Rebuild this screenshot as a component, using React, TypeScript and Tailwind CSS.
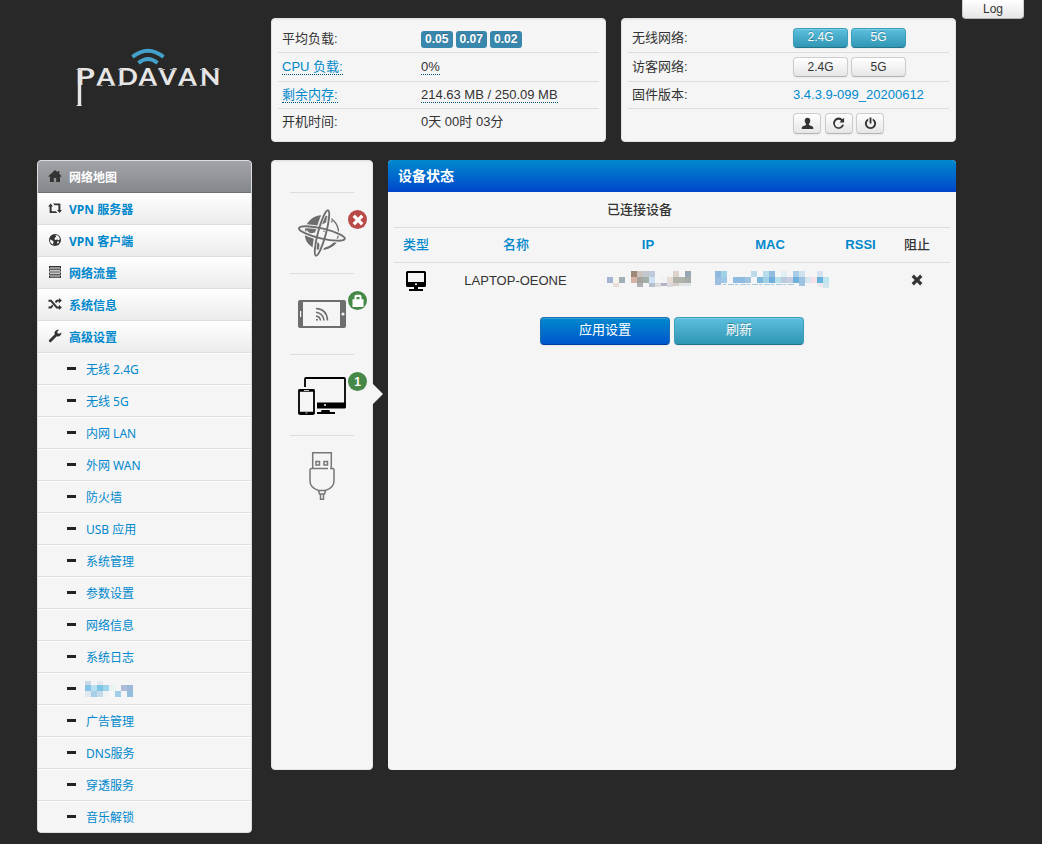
import type { ReactNode } from "react";
import clsx from "clsx";

type Block = [x: number, y: number, fill: string, h?: number];

// halflings style glyphs, all on a 14 x 14 grid
const glyphs: Record<string, ReactNode> = {
  home: <path d="M7 1 0.3 7.2 1 8 2 7.3V13h3.8V9h2.4v4H12V7.3l1 .7.7-.8-2.4-2.3V2H9.6v1.3z" />,
  retweet: <path d="M2.6 2.4 5 5.4H3.6v4.8h4.2l1.6 1.9H2.4q-.8 0-.8-.9V5.4H.1zM5 2.4h6.6q.8 0 .8.9v5.6h1.5L11.5 12 9 8.9h1.4V4.3H6.6z" />,
  globe: (
    <>
      <circle cx="7" cy="7" r="6" />
      <path fill="#f8f8f8" d="M7.4 2.1 9.6 2.4 11 3.8l.9 2.1-1 1.4-1.9-.8-1.6.5-1-.9.6-1.5 1.2-.6zM2.1 6.2l2.2 1.2 1.5 1.3-.7 1.4.1 1.6-1.7-1.1L2.2 9zM9 8.6l2.2-.2-.6 1.7-1.2.9z" />
    </>
  ),
  list: <path fillRule="evenodd" d="M1 1h12v2.4H1zM1 4.2h12v2.4H1zM1 7.4h12v2.4H1zM1 10.6h12V13H1zM2 1.9v.7h10v-.7zM2 5.1v.7h10v-.7zM2 8.3v.7h10v-.7zM2 11.5v.7h10v-.7z" />,
  random: <path d="M.5 2.8h3L9.3 9.4h1.6V7.7l3 2.7-3 2.7v-1.7H8.4L2.6 4.8H.5zM10.9.9l3 2.7-3 2.7V4.8H9.3L8.1 6.2 6.9 4.8l1.6-2h2.4zM.5 9.4h2.1l1.6-1.8L5.4 9l-2.1 2.4H.5z" />,
  wrench: <path d="M13.3 3.5c.3 1.9-1 3.7-2.9 3.9-.6.1-1.1 0-1.6-.2L3.3 12.7a1.4 1.4 0 0 1-2-2L6.8 5.2C6 3 7.5.8 9.9.7c.4 0 .8 0 1.2.1L9.2 2.7l.3 1.6 1.7.4z" />,
  user: <path d="M7 .8c1.9 0 3 1.2 3 3 0 1.6-.7 2.900-1.400 3.600v1.100c1.500.6 4 1.200 4.400 2.300.2.600.2 1.400.2 2H.8c0-.6 0-1.400.2-2 .4-1.100 2.900-1.700 4.400-2.300V7.400C4.700 6.700 4 5.400 4 3.800c0-1.800 1.100-3 3-3z" />,
  repeat: <path d="M11.400 2.300 13 .9v5H8.100l1.700-1.800a4 4 0 1 0 1.100 4.200H13A6 6 0 1 1 11.400 2.300z" />,
  off: <path d="M6 .5h2V7H6zM4.600 1.500v2.300a4 4 0 1 0 4.800 0V1.500a6 6 0 1 1-4.800 0z" />,
  remove: <path d="M3.900 1.600 7 4.700l3.100-3.100 2.300 2.300L9.300 7l3.100 3.100-2.300 2.300L7 9.300l-3.100 3.100-2.300-2.300L4.700 7 1.600 3.900z" />,
  minus: <path d="M3 5h9v3H3z" />,
  lock: <path fillRule="evenodd" d="M1.500 5.200h2V2.600q0-1.900 1.900-1.900h3.200q1.900 0 1.900 1.900v2.600h2V13h-11zM5.500 5.200h3V2.900H5.500z" />,
};

const Glyph = ({ name, className }: { name: string; className?: string }) => (
  <svg viewBox="0 0 14 14" className={clsx("shrink-0 fill-current", className)}>
    {glyphs[name]}
  </svg>
);

const Mosaic = ({ w, h, blocks, children }: { w: number; h: number; blocks: Block[]; children?: ReactNode }) => (
  <svg width={w} height={h} shapeRendering="crispEdges" className="block">
    {blocks.map(([x, y, fill, bh]) => (
      <rect key={`${x}-${y}`} x={x} y={y} width="6" height={bh ?? 6} fill={fill} />
    ))}
    {children}
  </svg>
);

const hiddenMenu: Block[] = [
  [0, 0, "#c9dae6", 4], [6, 0, "#f5f5f5", 4], [12, 0, "#e6e8ee", 4],
  [0, 4, "#85c5e6"], [6, 4, "#b9dff0"], [12, 4, "#7fc4e4"], [18, 4, "#9fd5ec"], [24, 4, "#eaf3f3"], [36, 4, "#aebcdc"], [42, 4, "#9fb8da"],
  [0, 10, "#e0e8f0"], [6, 10, "#a8cfe8"], [12, 10, "#c5dae8"], [18, 10, "#f0f3f4"], [24, 10, "#f8f8f8"], [30, 10, "#9fd0e8"], [42, 10, "#92bfe0"],
];

const hiddenIp: Block[] = [
  [24, 0, "#a08878"], [30, 0, "#cbc4bd"], [36, 0, "#c3c7d0"], [42, 0, "#c0c9d8"], [66, 0, "#ddd3cc"], [78, 0, "#98a5b2"],
  [0, 6, "#a3b3d2"], [6, 6, "#f4f4ec"], [12, 6, "#9fafb3"], [24, 6, "#d5b3a5"], [30, 6, "#a9a29c"], [36, 6, "#a3afa9"], [42, 6, "#cde3f4"],
  [54, 6, "#f0f3f6"], [60, 6, "#e6dcd5"], [66, 6, "#b2b3a9"], [72, 6, "#adb3a9"], [78, 6, "#a8aca9"],
  [6, 12, "#e8ddd8", 4], [30, 12, "#b0b0b2", 4], [42, 12, "#b9bfce", 4], [48, 12, "#dddddd", 4], [54, 12, "#b3b1c3", 3], [60, 12, "#dcd7dc", 4],
  [66, 12, "#d5cdc6", 3], [72, 12, "#dfe2e0", 3], [78, 12, "#dde6e8", 3],
];

const hiddenMac: Block[] = [
  [0, 0, "#90b8de"], [6, 0, "#a0d2e6"], [36, 0, "#bddaea"], [48, 0, "#b8dcec"], [54, 0, "#8fbcdf"], [66, 0, "#e0eff5"], [78, 0, "#a8cde8"],
  [84, 0, "#cfe2f0"], [102, 0, "#d8e2ee"],
  [0, 6, "#9dbee0", 8], [6, 6, "#a0c8e4"], [18, 6, "#8fbce0"], [24, 6, "#8dbadf"], [30, 6, "#a0c4e0"], [42, 6, "#7fb8dd"], [48, 6, "#a0d0e6"],
  [54, 6, "#72aedc"], [60, 6, "#b5e0ec"], [66, 6, "#b9cbdd"], [72, 6, "#c5cfe0"], [78, 6, "#6cb0dc"], [84, 6, "#9dc2e2"], [90, 6, "#d8e4ee"],
  [96, 6, "#f4e2e8"], [102, 6, "#68b3de"], [108, 6, "#bde5f0"],
  [84, 12, "#a0c4e2", 3], [102, 12, "#ece8ee", 4], [108, 12, "#d0e4ee", 5],
];

const mainMenu = [
  { icon: "home", label: "网络地图", active: true },
  { icon: "retweet", label: "VPN 服务器" },
  { icon: "globe", label: "VPN 客户端" },
  { icon: "list", label: "网络流量" },
  { icon: "random", label: "系统信息" },
  { icon: "wrench", label: "高级设置" },
];

const subMenu = [
  "无线 2.4G", "无线 5G", "内网 LAN", "外网 WAN", "防火墙", "USB 应用", "系统管理", "参数设置",
  "网络信息", "系统日志", "", "广告管理", "DNS服务", "穿透服务", "音乐解锁",
];

// letter, left edge, horizontal stretch
const letters: [string, number, number][] = [
  ["P", -0.4, 1.42], ["A", 20.8, 1.18], ["D", 41.4, 1.22], ["A", 62.8, 1.18], ["V", 82.6, 1.18], ["A", 102.4, 1.18], ["N", 124, 1.2],
];
const serifs: [number, number, number][] = [
  [0.5, 0, 5], [20.5, 16, 6], [32, 16, 7.5], [42, 0, 4], [42, 16, 4], [62.5, 16, 6], [74, 16, 7],
  [82, 0, 7], [94, 0, 7], [102, 16, 6], [114, 16, 7], [124, 0, 4], [124, 16, 6], [137.5, 0, 6],
];

const Logo = () => (
  <svg width="146" height="62" viewBox="0 -23 146 62" fill="#e6e6e6">
    <g fill="none" stroke="#43a1ca" strokeWidth="3.8">
      <path d="M56.5 -12Q72 -24.500 87.500 -12" />
      <path d="M62.500 -6Q72 -14 81.500 -6" />
    </g>
    {letters.map(([c, x, s], i) => (
      <text key={i} transform={`translate(${x} 16.4) scale(${s} 1)`} className="font-['Lato'] text-[22px] font-bold">{c}</text>
    ))}
    {serifs.map(([x, y, w], i) => <rect key={i} x={x} y={y} width={w} height="1" fill="#a8a8a8" />)}
    <path d="M1.800.5h3.400v36H1.800zM.700 36h5v1h-5z" />
  </svg>
);

const Card = ({ className, children }: { className?: string; children: ReactNode }) => (
  <section className={clsx("rounded border border-[#e3e3e3] bg-[#f5f5f5] shadow-[inset_0_1px_1px_rgba(0,0,0,0.05)]", className)}>{children}</section>
);

const InfoRow = ({ label, link, labelWidth, className, children }: { label?: string; link?: boolean; labelWidth: string; className: string; children: ReactNode }) => (
  <div className={clsx("flex items-center border-[#ddd] pl-1", className)}>
    <div className={labelWidth}>
      {label && <span className={link ? "border-b border-dotted border-[#005580] text-[#08c]" : ""}>{label}</span>}
    </div>
    <div className="flex items-center">{children}</div>
  </div>
);

const btn = "flex items-center justify-center rounded border shadow-[inset_0_1px_0_rgba(255,255,255,0.2),0_1px_2px_rgba(0,0,0,0.05)]";
const btnPlain = "border-[#ccc] border-b-[#b3b3b3] bg-linear-to-b from-white to-[#e6e6e6] text-[#333]";
const btnInfo = "border-[#3a9db9] border-b-[#24748c] bg-linear-to-b from-[#5bc0de] to-[#2f96b4] text-white [text-shadow:0_-1px_0_rgba(0,0,0,0.25)]";

const Band = ({ name, on }: { name: string; on?: boolean }) => (
  <button className={clsx(btn, "mr-[3px] h-5 w-[55px] pb-px text-xs", on ? btnInfo : btnPlain)}>{name}</button>
);

const dotted = "border-b border-dotted border-[#005580] leading-[15px]";

const Badge = ({ color, children }: { color: string; children: ReactNode }) => (
  <span className={clsx("absolute top-[18px] left-[76px] flex size-[19px] items-center justify-center rounded-full text-xs font-bold text-white", color)}>{children}</span>
);

const GlobeIcon = () => (
  <svg width="48" height="48" viewBox="0 0 48 48" fill="none" stroke="#6e6e6e">
    <circle cx="24" cy="23.500" r="16.500" strokeWidth="1.300" />
    <path fill="#6e6e6e" stroke="none" d="M7.500 20C9 13 15 7 24 7l5 1.500-1 5-4 2-1 3-4 1-2 4-5 1-2-2zM7 26l8 3 2 3 4 2 .5 3-1 4C12 38 7 33 7 26zM29 9l3 1 3 3-4 1zM37 32l3-1c-2 5-7 8.500-14 9.500l1-2c4-1 7-3 10-6.500zM26 20l3-1 2 1-2 2-4 1z" />
    <ellipse cx="24" cy="24" rx="4.500" ry="23" transform="rotate(15 24 24)" stroke="#f5f5f5" strokeWidth="4" />
    <ellipse cx="24" cy="24.500" rx="23.500" ry="5" transform="rotate(13 24 24)" stroke="#f5f5f5" strokeWidth="4" />
    <ellipse cx="24" cy="24.500" rx="23.500" ry="5" transform="rotate(13 24 24)" strokeWidth="1.900" />
    <ellipse cx="24" cy="24" rx="4" ry="23.500" transform="rotate(15 24 24)" strokeWidth="1.900" />
  </svg>
);

const WifiIcon = () => (
  <svg width="48" height="48" viewBox="0 0 48 48" fill="none" stroke="#6e6e6e" strokeWidth="1.600">
    <path fill="#6e6e6e" stroke="none" fillRule="evenodd" d="M2 10h44q2 0 2 2v24q0 2-2 2H2q-2 0-2-2V12q0-2 2-2zM5 12v24h37V12z" />
    <path stroke="#f5f5f5" strokeWidth="1.200" d="M2.600 21v6" />
    <circle cx="45" cy="24" r="1.600" fill="#f5f5f5" stroke="none" />
    <path d="M18 18.500Q29 19 29.500 30.500M18 22.200Q25 23 26 30.500M18 26Q22 26.500 22.500 30.500" />
    <circle cx="19" cy="29.700" r="1" fill="#6e6e6e" stroke="none" />
  </svg>
);

const DevicesIcon = () => (
  <svg width="48" height="48" viewBox="0 -1 48 48" fill="none" stroke="#000" strokeWidth="2">
    <path d="M7 15V7q0-1 1-1h38q1 0 1 1v26" strokeWidth="1.800" />
    <path fill="#000" stroke="none" d="M19 30.500h29V35q0 1.500-1.500 1.500H19zM23.500 38h8l.5 2h5v2H19v-2h4z" />
    <rect x="1" y="18" width="15" height="24" rx="1.200" strokeWidth="1.800" />
    <path d="M.5 18.500h16M.5 41h16" strokeWidth="2.400" />
    <circle cx="27" cy="33" r="1" fill="#fff" stroke="none" />
    <path stroke="#f5f5f5" strokeWidth=".8" d="M6 18.500h5M7.500 41h2" />
  </svg>
);

const UsbIcon = () => (
  <svg width="48" height="48" viewBox="0 0 48 48" fill="none" stroke="#777" strokeWidth="1.500">
    <path d="M14.700 16V.8h18.600V16M30 16.500H13.500q-1.500 0-1.500 1.500v11c0 5 4 8 8.500 9.500h7C32 37 36 34 36 29V18q0-1.500-1.500-1.500H32" />
    <path d="M18 9.500h3.500V13H18zM26 9.500h3.500V13H26zM20.500 38.500l1 3.500h5l1-3.500M22.500 42v5.200h3V42" />
  </svg>
);

const Sidebar = () => (
  <nav className="h-[673px] w-[215px] overflow-hidden rounded border border-[#ddd] bg-[#f5f5f5] font-['Noto_Sans','Noto_Sans_CJK_SC',sans-serif] text-xs">
    {mainMenu.map((m) => (
      <a key={m.label} className={clsx("flex h-8 items-center border-b pt-[3px] pl-2.5 font-bold", m.active ? "border-[#6f7174] bg-linear-to-b from-[#a2a4a9] to-[#85888b] text-white" : "border-[#ddd] bg-linear-to-b from-white to-[#ececec] text-[#08c]")}>
        <Glyph name={m.icon} className="mr-[7px] mb-1 size-3.5 text-[#333]" />
        {m.label}
      </a>
    ))}
    {subMenu.map((label) => (
      <a key={label} className="flex h-8 items-center border-b border-[#ddd] pt-[3px] pl-[26px] text-[#08c] shadow-[inset_0_1px_0_#fff]">
        <Glyph name="minus" className="mr-2 mb-0.5 size-3.5 text-[#222]" />
        {label ? label : <span className="-ml-px pb-0.5"><Mosaic w={48} h={16} blocks={hiddenMenu} /></span>}
      </a>
    ))}
  </nav>
);

const IconColumn = () => {
  const items = [
    { art: <GlobeIcon />, badge: <Badge color="bg-[#b94a48]"><Glyph name="remove" className="size-3.5" /></Badge> },
    { art: <WifiIcon />, badge: <Badge color="bg-[#468847]"><Glyph name="lock" className="size-3.5" /></Badge> },
    { art: <DevicesIcon />, badge: <Badge color="bg-[#468847]">1</Badge>, current: true },
    { art: <UsbIcon /> },
  ];
  return (
    <Card className="ml-[19px] h-[610px] w-[102px] pt-[31px]">
      {items.map((it, i) => (
        <div key={i} className="relative h-[81px]">
          <div className="mx-auto flex h-full w-16 justify-center border-t border-[#ddd] pt-4">{it.art}</div>
          {it.badge}
          {it.current && (
            <svg width="11" height="20" className="absolute top-[30px] -right-[11px] fill-[#f5f5f5]"><path d="M0 0h1l10 10-10 10H0z" /></svg>
          )}
        </div>
      ))}
    </Card>
  );
};

const cols = "grid grid-cols-[44px_156px_108px_136px_45px_68px] justify-items-center";

const DevicePanel = () => (
  <section className="ml-[15px] h-[610px] w-[568px] overflow-hidden rounded bg-[#f5f5f5]">
    <h1 className="flex h-8 items-center bg-linear-to-b from-[#08c] to-[#04c] pl-2.5 text-sm font-bold text-white">设备状态</h1>
    <div className="ml-1.5 w-[556px]">
      <div className="flex h-[35px] items-center pl-[213px] font-medium">已连接设备</div>
      <div className={clsx(cols, "h-[35px] items-center border-t border-[#ddd] font-bold text-[#08c]")}>
        <span className="font-medium">类型</span>
        <span className="font-medium">名称</span>
        <span>IP</span>
        <span>MAC</span>
        <span>RSSI</span>
        <span className="font-medium text-[#333]">阻止</span>
      </div>
      <div className={clsx(cols, "h-[55px] items-start border-t border-[#ddd]")}>
        <svg width="20" height="20" viewBox="0 0 20 20" className="mt-2">
          <path fillRule="evenodd" d="M1.500 0h17Q20 0 20 1.500v13q0 1.500-1.500 1.500H12v2h5v2H3v-2h5v-2H1.500Q0 16 0 14.500v-13Q0 0 1.500 0zM2 2v9h16V2z" />
          <circle cx="10" cy="13.300" r="1" fill="#fff" />
        </svg>
        <span className="mt-[9px] -ml-px">LAPTOP-OEONE</span>
        <div className="mt-2 pl-0.5">
          <Mosaic w={84} h={17} blocks={hiddenIp} />
        </div>
        <div className="mt-2 pl-1">
          <Mosaic w={114} h={17} blocks={hiddenMac}>
            <path d="M8 13.500h72" stroke="#a9c9e2" strokeDasharray="3 2 6 1" />
          </Mosaic>
        </div>
        <span />
        <Glyph name="remove" className="mt-2.5 size-3.5 text-[#333]" />
      </div>
      <div className="flex gap-1 pl-[146px]">
        <button className={clsx(btn, "h-7 w-[130px] border-[#1a6fb5] border-b-[#003a9e] bg-linear-to-b from-[#08c] to-[#0055cc] pb-0.5 text-white")}>应用设置</button>
        <button className={clsx(btn, btnInfo, "h-7 w-[130px] pb-0.5")}>刷新</button>
      </div>
    </div>
  </section>
);

export default function App() {
  return (
    <div className="relative h-[844px] w-[1042px] overflow-hidden bg-[#282828] pt-[18px] pl-[37px] font-['Liberation_Sans','Noto_Sans_CJK_SC',sans-serif] text-[13px] leading-[18px] text-[#333]">
      <button className={clsx(btnPlain, "absolute top-0 left-[962px] h-[19px] w-[62px] rounded-b border border-t-0 pb-px text-xs leading-4")}>Log</button>

      <header className="flex h-[142px]">
        <div className="w-[234px] pt-[28px] pl-[39px]"><Logo /></div>
        <Card className="h-[124px] w-[335px] px-1.5 pt-1.5">
          <InfoRow label="平均负载:" labelWidth="w-[139px]" className="h-7 border-b">
            {["0.05", "0.07", "0.02"].map((n) => (
              <span key={n} className="mt-px mr-[3px] h-[17px] w-[31.5px] rounded-[3px] bg-[#3a87ad] text-center text-xs leading-4 font-bold text-white [text-shadow:0_-1px_0_rgba(0,0,0,0.25)]">{n}</span>
            ))}
          </InfoRow>
          <InfoRow label="CPU 负载:" link labelWidth="w-[139px]" className="h-[29px] border-b">
            <span className={dotted}>0%</span>
          </InfoRow>
          <InfoRow label="剩余内存:" link labelWidth="w-[139px]" className="h-[27px] border-b">
            <span className={dotted}>214.63 MB / 250.09 MB</span>
          </InfoRow>
          <InfoRow label="开机时间:" labelWidth="w-[139px]" className="h-[25px]">0天 00时 03分</InfoRow>
        </Card>
        <Card className="ml-[15px] h-[124px] w-[335px] px-1.5 pt-1.5">
          <InfoRow label="无线网络:" labelWidth="w-[161px]" className="h-7 border-b pb-0.5">
            <Band name="2.4G" on />
            <Band name="5G" on />
          </InfoRow>
          <InfoRow label="访客网络:" labelWidth="w-[161px]" className="h-[29px] border-b">
            <Band name="2.4G" />
            <Band name="5G" />
          </InfoRow>
          <InfoRow label="固件版本:" labelWidth="w-[161px]" className="h-[27px] border-b">
            <a className="text-[#08c]">3.4.3.9-099_20200612</a>
          </InfoRow>
          <InfoRow labelWidth="w-[161px]" className="h-[29px]">
            {["user", "repeat", "off"].map((n) => (
              <button key={n} className={clsx(btn, btnPlain, "mr-[3.5px] h-[21px] w-7")}><Glyph name={n} className="size-[13px]" /></button>
            ))}
          </InfoRow>
        </Card>
      </header>

      <main className="flex items-start">
        <Sidebar />
        <IconColumn />
        <DevicePanel />
      </main>
    </div>
  );
}
